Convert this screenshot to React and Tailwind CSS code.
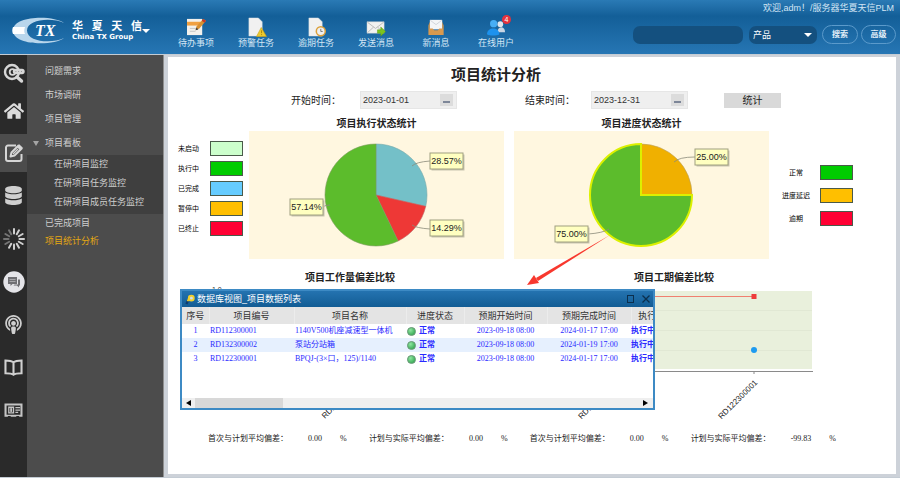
import { useState } from 'react';
import { FaHome, FaDatabase, FaPodcast } from 'react-icons/fa';

const SearchMark = () => (
  <svg viewBox="0 0 22 22" className="w-[22px] h-[22px]" fill="none" stroke="#d6d6d6">
    <circle cx="9" cy="10" r="7" strokeWidth="2.4" />
    <circle cx="9.5" cy="10" r="2.8" strokeWidth="1.8" />
    <path d="M14 15l4.500 4" strokeWidth="3.400" strokeLinecap="round" />
    <path d="M12.500 9.500h6.500" strokeWidth="5.400" strokeLinecap="round" />
    <path d="M12.5 9.5h.8M15.3 9.5h.8M18.1 9.5h.8" stroke="#888" strokeWidth="1.2" />
  </svg>
);

const EditMark = () => (
  <svg viewBox="0 0 20 20" className="w-[20px] h-[20px]" fill="none" stroke="#d6d6d6" strokeWidth="2">
    <path d="M12 2.500H4a2 2 0 0 0-2 2V16a2 2 0 0 0 2 2h11.500a2 2 0 0 0 2-2v-5" />
    <path d="M6.500 13.500l1-4 7-7 3.200 3-7.200 7z" strokeLinejoin="round" />
    <path d="M9 11l5-5" strokeWidth="1.200" />
    <path d="M13 4l3.200 3 2.300-2.300-3.200-3z" fill="#d6d6d6" strokeWidth=".5" />
  </svg>
);

const Spokes = () => (
  <svg viewBox="0 0 24 24" className="w-6 h-6" stroke="#d0d0d0" strokeWidth="2" strokeLinecap="round">
    {[...Array(12)].map((_, i) => (
      <path key={i} d="M12 2v4.5" opacity={i > 7 ? 0.45 : 1} transform={`rotate(${i * 30} 12 12)`} />
    ))}
  </svg>
);

const ChatMark = () => (
  <svg viewBox="0 0 22 22" className="w-[22px] h-[22px]">
    <circle cx="11" cy="11" r="10.7" fill="#e4e4e8" />
    <path d="M5 6h9v7H9.500l-2 2v-2H5z" fill="#6f6f73" />
    <path d="M15 8.500h2v6h-1v2l-2-2h-3.500l1-1H15z" fill="#6f6f73" />
    <path d="M6.500 8.500h6M6.500 10.500h6" stroke="#b5b5b8" strokeWidth=".8" />
  </svg>
);

const BookMark = () => (
  <svg viewBox="0 0 20 18" className="w-[19px] h-[17px]" fill="none" stroke="#d0d0d0" strokeWidth="2.200">
    <path d="M10 3.500C8 1.800 5 1.500 1.500 1.500v13.500c3.500 0 6.500 0 8.500 1.500 2-1.500 5-1.500 8.500-1.500V1.500C15 1.500 12 1.800 10 3.500zM10 3.500v13" />
  </svg>
);

const CardMark = () => (
  <svg viewBox="0 0 20 16" className="w-[19px] h-[15px]" fill="none" stroke="#c4c4c4">
    <path d="M1.500 1.500h17v12h-17z" strokeWidth="2.200" />
    <path d="M5 4.500h5v6H5z" strokeWidth="1.400" />
    <path d="M7.500 5.500v4" strokeWidth="2" />
    <path d="M12 5h5M12 7.500h5M12 10h3" strokeWidth="1.300" />
    <path d="M4 14.500h3M13 14.500h3" stroke="#2a2a2a" strokeWidth="1.500" />
  </svg>
);

const topRail = [
  { id: 'search', label: '搜索', icon: <SearchMark /> },
  { id: 'home', label: '首页', icon: <FaHome size={20} /> },
];

const rail = [
  { id: 'edit', label: '项目', icon: <EditMark />, active: true },
  { id: 'data', label: '数据', icon: <FaDatabase size={19} /> },
  { id: 'load', label: '进度', icon: <Spokes /> },
  { id: 'chat', label: '消息', icon: <ChatMark /> },
  { id: 'cast', label: '广播', icon: <FaPodcast size={19} /> },
  { id: 'book', label: '文档', icon: <BookMark /> },
  { id: 'card', label: '名片', icon: <CardMark /> },
];

const PageShape = () => <path d="M3 1h10l4 4v15H3z" fill="#f1f1f1" stroke="#d5dbe0" strokeWidth=".5" />;

const tools = [
  {
    label: '待办事项',
    icon: (
      <>
        <path d="M1 2h16v17H1z" fill="#f3f1ec" />
        <path d="M1 5h15v4H1z" fill="#f0a040" />
        <path d="M4 12h8M4 15h6" stroke="#c5c5c5" />
        <path d="M10 14l1-4 7-8 3 2-7 8z" fill="#d99030" />
        <path d="M18 2l3 2-1.500 2-3-2z" fill="#c43a2a" />
        <path d="M10 14l1-3 2 2z" fill="#444" />
      </>
    ),
  },
  {
    label: '预警任务',
    icon: (
      <>
        <PageShape />
        <path d="M16 11l5.500 9.500H11z" fill="#ecc92e" stroke="#c9a012" strokeWidth=".6" />
        <path d="M16.300 14v3M16.300 18v1" stroke="#a88410" strokeWidth="1" />
      </>
    ),
  },
  {
    label: '逾期任务',
    icon: (
      <>
        <PageShape />
        <circle cx="15.500" cy="15" r="4.700" fill="#eef0f2" stroke="#dca03a" strokeWidth="1.600" />
        <path d="M15.500 12.500v2.700h2" fill="none" stroke="#777" />
      </>
    ),
  },
  {
    label: '发送消息',
    icon: (
      <>
        <path d="M1 5h18v12H1z" fill="#f2f2f0" stroke="#c9c9c9" strokeWidth=".5" />
        <path d="M1.500 5.500L10 12l8.500-6.500M1.500 16.500L8 10.500M18.500 16.500L12 10.500" fill="none" stroke="#b9b9b9" />
        <path d="M12 13.500h3.500v-3l5 4.800-5 4.700v-3H12z" fill="#7cc41e" stroke="#549a10" strokeWidth=".5" />
      </>
    ),
  },
  {
    label: '新消息',
    icon: (
      <>
        <path d="M4 3h13v10H4z" fill="#f4f5f7" />
        <path d="M2.500 9L4 5v7h3l1.500 2h4l1.500-2h3V5l1.500 4v10h-16z" fill="#d9994e" />
        <path d="M4.500 3.500l6 4.500 6-4.500" fill="none" stroke="#d0d4da" />
      </>
    ),
  },
  {
    label: '在线用户',
    badge: 4,
    icon: (
      <>
        <circle cx="15" cy="7.500" r="3" fill="#dfe6ee" />
        <path d="M12 16c0-7 8-7 8 0z" fill="#c9d6e4" />
        <circle cx="8" cy="7" r="3.800" fill="#47aef5" />
        <path d="M1 18c0-8 13-8 13 0-3 2-10 2-13 0z" fill="#1d92ee" />
      </>
    ),
  },
];

const executionLegend = [
  ['未启动', 'bg-[#ccffcc]'],
  ['执行中', 'bg-[#00cc00]'],
  ['已完成', 'bg-[#66ccff]'],
  ['暂停中', 'bg-[#ffbf00]'],
  ['已终止', 'bg-[#ff0033]'],
];

const progressLegend = [
  ['正常', 'bg-[#00cc00]'],
  ['进度延迟', 'bg-[#ffbf00]'],
  ['逾期', 'bg-[#ff0033]'],
];

const rows = [
  ['1', 'RD112300001', '1140V500机座减速型一体机', '正常', '2023-09-18 08:00', '2024-01-17 17:00', '执行中'],
  ['2', 'RD132300002', '泵站分站箱', '正常', '2023-09-18 08:00', '2024-01-19 17:00', '执行中'],
  ['3', 'RD122300001', 'BPQJ-(3×口，125)/1140', '正常', '2023-09-18 08:00', '2024-01-17 17:00', '执行中'],
];

function slicePath(cx, cy, r, from, to) {
  const point = (t) => {
    const a = t * 2 * Math.PI;
    return `${cx + r * Math.sin(a)} ${cy - r * Math.cos(a)}`;
  };
  return `M${cx} ${cy}L${point(from)}A${r} ${r} 0 ${to - from > 0.5 ? 1 : 0} 1 ${point(to)}Z`;
}

function Pie({ slices, tags }) {
  return (
    <svg viewBox="0 0 255 128" className="w-[255px] h-[128px]">
      {slices.map((s) => (
        <path key={s.from} d={slicePath(127, 64, 51, s.from, s.to)} fill={s.fill} stroke={s.stroke} strokeWidth={s.width} />
      ))}
      {tags.map((t) => (
        <g key={t.text}>
          <path d={t.line} fill="none" stroke="#8a8a7a" strokeWidth=".8" />
          <rect x={t.x + 1.5} y={t.y + 1.5} width="33" height="16" fill="#c9c5b0" />
          <rect x={t.x} y={t.y} width="33" height="16" fill="#ffffc0" stroke="#a0a080" />
          <text x={t.x + 16.5} y={t.y + 11} fontSize="9" textAnchor="middle" fill="#222" fontFamily="Liberation Sans, sans-serif">{t.text}</text>
        </g>
      ))}
    </svg>
  );
}

function Legend({ items, className, labelClass }) {
  return (
    <ul className={className}>
      {items.map(([label, color]) => (
        <li key={label} className="flex items-center">
          <span className={`text-[7px] leading-[15px] text-black ${labelClass}`}>{label}</span>
          <span className={`w-[33px] h-[15px] border border-[#4a5a4a] ${color}`} />
        </li>
      ))}
    </ul>
  );
}

function DateField({ id, value, onChange }) {
  return (
    <div className="flex items-center w-[97px] h-[18px] bg-[#efefef] border border-[#e6e6e6] pr-[3px]">
      <input id={id} type="text" value={value} onChange={(e) => onChange(e.target.value)} className="min-w-0 flex-1 bg-transparent pl-[2px] text-[9px] leading-4 text-[#333] outline-none" />
      <button type="button" aria-label="选择日期" className="flex w-[13px] h-[12px] items-end justify-center bg-[#dcdcdc] pb-[3px]">
        <span className="w-[7px] h-[2px] bg-[#7d8698]" />
      </button>
    </div>
  );
}

function Header() {
  return (
    <header className="flex h-[54px] shrink-0 items-stretch bg-linear-to-b from-[#2a7ab5] via-[#135f98] via-30% to-[#2676b4] text-white">
      <a href="#home" className="flex items-start gap-[6px] pl-[12px] pt-[17px]">
        <svg viewBox="0 0 54 27" className="w-[54px] h-[27px]">
          <path d="M52 6C42-2 1-2 1 13.500S42 29 52 21C40 27 15 25 15 13.500S40 0 52 6z" fill="#b9d6ec" />
          <path d="M1 10h12c-1 3-1 5 0 7H1c-1-2-1-5 0-7z" fill="#fff" />
          <text x="23" y="19" fontSize="16" fontWeight="bold" fontStyle="italic" fill="#fff" fontFamily="Liberation Serif, serif">TX</text>
        </svg>
        <span className="flex w-[70px] flex-col pt-[2px]">
          <span className="flex justify-between text-[11px] leading-[14px] font-bold">
            <span>华</span><span>夏</span><span>天</span><span>信</span>
          </span>
          <span className="font-['DejaVu_Sans',sans-serif] whitespace-nowrap text-[7px] leading-[8px] font-bold">China TX Group</span>
        </span>
        <span className="-ml-[6px] mt-[12px] border-x-4 border-t-4 border-x-transparent border-t-white" />
      </a>
      <nav className="ml-[16px] flex pt-[17px]">
        {tools.map((t) => (
          <a key={t.label} href="#tool" className="relative flex w-[60px] flex-col items-center">
            <svg viewBox="0 0 22 21" className="w-[21px] h-[20px]">{t.icon}</svg>
            <span className="text-[9px] leading-[12px] text-[#d3e6f5]">{t.label}</span>
            {t.badge && (
              <span className="absolute -top-[2px] right-[15px] flex h-[9px] w-[9px] items-center justify-center rounded-full bg-[#e5323c] text-[7px] leading-none">{t.badge}</span>
            )}
          </a>
        ))}
      </nav>
      <div className="ml-auto flex flex-col items-end pr-[4px]">
        <p className="pr-[2px] pt-[1px] text-[9px] leading-[14px] text-[#d3e6f5]">欢迎,adm！/服务器华夏天信PLM</p>
        <form className="mt-[10px] flex items-center" onSubmit={(e) => e.preventDefault()}>
          <input type="text" aria-label="关键字" className="mr-[6px] h-[18px] w-[110px] rounded-[7px] bg-[#14507f] px-2 text-[9px] outline-none" />
          <span className="relative mr-[5px] flex">
            <select aria-label="类型" className="h-[18px] w-[68px] appearance-none rounded-[7px] bg-[#14507f] pl-[4px] text-[9px] leading-[14px] outline-none">
              <option>产品</option>
            </select>
            <span className="pointer-events-none absolute right-[5px] top-[7px] border-x-4 border-t-4 border-x-transparent border-t-white" />
          </span>
          <button type="submit" className="mr-[3px] h-[19px] w-[36px] rounded-full border border-[#5b9acb] text-[8px] leading-[14px] font-bold text-[#e3eff8]">搜索</button>
          <button type="button" className="h-[19px] w-[35px] rounded-full border border-[#5b9acb] text-[8px] leading-[14px] font-bold text-[#e3eff8]">高级</button>
        </form>
      </div>
    </header>
  );
}

function Sidebar() {
  return (
    <aside className="flex shrink-0 text-[#cfcfcf]">
      <div className="w-[27px] bg-[#2a2a2a]">
        {topRail.map((r) => (
          <button key={r.id} type="button" aria-label={r.label} className="flex h-[38px] w-full items-center justify-center pb-[2px] text-[#dcdcdc]">{r.icon}</button>
        ))}
        {rail.map((r) => (
          <div key={r.id} className="flex h-[43px] w-full items-center">
            <button type="button" aria-label={r.label} className={`flex h-[38px] w-full items-center justify-center ${r.active ? 'bg-[#4c4c4c]' : ''}`}>{r.icon}</button>
          </div>
        ))}
      </div>
      <nav className="w-[137px] border-r border-[#8f8f8f] bg-[#4c4c4c] pt-[4px] text-[9px]">
        <a href="#a" className="block pl-[18px] leading-6">问题需求</a>
        <a href="#b" className="block pl-[18px] leading-6">市场调研</a>
        <a href="#c" className="block pl-[18px] leading-6">项目管理</a>
        <a href="#d" className="flex items-center pl-[6px] leading-6">
          <span className="mr-[6px] border-x-[3px] border-t-[5px] border-x-transparent border-t-[#a5a5a5]" />
          项目看板
        </a>
        <div className="bg-[#3f3f3f] pb-[2px]">
          <a href="#e" className="block pl-[27px] leading-[19px]">在研项目监控</a>
          <a href="#f" className="block pl-[27px] leading-[19px]">在研项目任务监控</a>
          <a href="#g" className="block pl-[27px] leading-[19px]">在研项目成员任务监控</a>
        </div>
        <a href="#h" className="block pl-[18px] leading-[18px]">已完成项目</a>
        <a href="#i" className="block pl-[18px] leading-[18px] text-[#e5a812]">项目统计分析</a>
      </nav>
    </aside>
  );
}

function DataWindow() {
  return (
    <section className="absolute left-[12px] top-[232px] w-[475px] border-2 border-[#3d8ac4] bg-white">
      <div className="flex h-[16px] items-center bg-linear-to-b from-[#2473b0] to-[#125c94] pl-[3px] pr-[3px] text-white">
        <svg viewBox="0 0 12 12" className="mr-[1px] h-[11px] w-[11px]" fill="none">
          <path d="M1.500 11L4.500 5" stroke="#0d3b70" strokeWidth="2.600" />
          <path d="M3 8L5 2" stroke="#f2d02c" strokeWidth="2" />
          <circle cx="7" cy="4.500" r="2.600" fill="#cfe0ee" stroke="#f2d02c" strokeWidth="2" />
        </svg>
        <h2 className="text-[9px] leading-[14px]">数据库视图_项目数据列表</h2>
        <button type="button" aria-label="最大化" className="ml-auto mr-[8px] h-[8px] w-[7px] border border-[#0b2f4e]" />
        <button type="button" aria-label="关闭">
          <svg viewBox="0 0 8 8" className="h-[8px] w-[8px]" stroke="#0b2f4e" strokeWidth="1.300"><path d="M.5.5l7 7M7.5.5l-7 7" /></svg>
        </button>
      </div>
      <div className="h-[91px] overflow-hidden">
        <table className="w-[500px] table-fixed border-collapse text-[8px] whitespace-nowrap">
          <colgroup>
            <col className="w-[27px]" />
            <col className="w-[85px]" />
            <col className="w-[112px]" />
            <col className="w-[58px]" />
            <col className="w-[83px]" />
            <col className="w-[84px]" />
            <col />
          </colgroup>
          <thead>
            <tr className="h-[17px] bg-[#e4e4e4] text-[9px] leading-[16px] text-[#333]">
              {['序号', '项目编号', '项目名称', '进度状态', '预期开始时间', '预期完成时间', '执行状态'].map((h) => (
                <th key={h} className="border-r border-[#ececec] p-0 font-normal">{h}</th>
              ))}
            </tr>
          </thead>
          <tbody className="font-['Liberation_Serif','Noto_Sans_CJK_SC',serif] text-[#2a2aff]">
            {rows.map(([no, code, name, state, start, end, run]) => (
              <tr key={no} className="h-[14px] leading-[14px] even:bg-[#e6f0fe]">
                <td className="p-0 text-center">{no}</td>
                <td className="p-0 pl-px">{code}</td>
                <td className="p-0 pl-px">{name}</td>
                <td className="p-0 pl-px">
                  <span className="flex items-center gap-[3px] font-bold">
                    <span className="h-[9px] w-[9px] rounded-full border border-[#6f9a7c] bg-radial-[at_35%_30%] from-[#8fe6a0] to-[#1f9a40]" />
                    {state}
                  </span>
                </td>
                <td className="p-0 text-center">{start}</td>
                <td className="p-0 text-center">{end}</td>
                <td className="p-0 font-bold">{run}</td>
              </tr>
            ))}
          </tbody>
        </table>
      </div>
      <div className="flex h-[10px] items-center bg-[#efefef]">
        <span className="mx-[4px] border-y-[3px] border-r-[5px] border-y-transparent border-r-black" />
        <span className="h-full w-[88px] bg-[#d8d8d8]" />
        <span className="ml-auto mr-[5px] border-y-[3px] border-l-[5px] border-y-transparent border-l-black" />
      </div>
    </section>
  );
}

function DeviationChart({ title, axisLabel, points }) {
  return (
    <section className="w-[276px]">
      <h2 className="text-center text-[10px] leading-[14px] font-bold">{title}</h2>
      <svg viewBox="0 0 276 134" className="h-[134px] w-[276px] overflow-visible" fontFamily="Liberation Sans, sans-serif">
        {axisLabel && <text x="0" y="7" fontSize="7" fill="#333">{axisLabel}</text>}
        <rect x="14" y="6" width="262" height="78" fill="#e9f0dc" />
        <path d="M14 25.500h262M14 45.500h262M14 65.500h262" stroke="#e1e8d4" />
        <path d="M12 86.500h265" stroke="#8a8a8a" />
        <path d={`M14 11.500H${points[points.length - 1].x}`} stroke="#f08070" />
        {points.map(({ x, code }) => (
          <g key={code}>
            <path d={`M${x} 86v3`} stroke="#8a8a8a" />
            <rect x={x - 2.5} y="9" width="5" height="5" fill="#ee3b3b" />
            <circle cx={x} cy="65" r="3" fill="#1e9bf0" />
            <text x={x + 4} y="98" fontSize="8" fill="#222" textAnchor="end" transform={`rotate(-45 ${x + 4} 98)`}>{code}</text>
          </g>
        ))}
      </svg>
    </section>
  );
}

const metrics = [
  ['首次与计划平均偏差：', '0.00'],
  ['计划与实际平均偏差：', '0.00'],
  ['首次与计划平均偏差：', '0.00'],
  ['计划与实际平均偏差：', '-99.83'],
];

export default function App() {
  const [start, setStart] = useState('2023-01-01');
  const [end, setEnd] = useState('2023-12-31');

  return (
    <div className="flex min-h-screen flex-col bg-[#c9ced4] font-['Liberation_Sans','Noto_Sans_CJK_SC',sans-serif]">
      <Header />
      <div className="flex flex-1 border-y border-[#c4ccd4]">
        <Sidebar />
        <main className="min-w-0 flex-1 bg-[#cdd2d9] pb-[3px] pl-[4px] pr-[4px] pt-[2px]">
          <div className="relative h-full bg-white pt-[6px] text-[#222]">
            <h1 className="pr-[72px] text-center text-[15px] leading-[24px] font-bold">项目统计分析</h1>
            <form className="mt-[4px] flex items-center pl-[123px] text-[10px]" onSubmit={(e) => e.preventDefault()}>
              <label htmlFor="start" className="mr-[19px]">开始时间：</label>
              <DateField id="start" value={start} onChange={setStart} />
              <label htmlFor="end" className="ml-[68px] mr-[16px]">结束时间：</label>
              <DateField id="end" value={end} onChange={setEnd} />
              <button type="submit" className="ml-[36px] h-[15px] w-[57px] bg-[#d9d9d9] leading-[15px]">统计</button>
            </form>

            <div className="mt-[8px] flex">
              <Legend items={executionLegend} className="flex w-[81px] shrink-0 flex-col gap-[5px] pl-[10px] pt-[24px]" labelClass="w-[32px]" />
              <section className="flex-1">
                <h2 className="text-center text-[10px] leading-[14px] font-bold">项目执行状态统计</h2>
                <div className="flex justify-center bg-[#fff7e0]">
                  <Pie
                    slices={[
                      { from: 0, to: 0.2857, fill: '#74c0c8', stroke: '#7aa', width: 0.6 },
                      { from: 0.2857, to: 0.4286, fill: '#ee3836', stroke: '#b66', width: 0.6 },
                      { from: 0.4286, to: 1, fill: '#5cbc2c', stroke: '#7a9a5a', width: 0.6 },
                    ]}
                    tags={[
                      { text: '28.57%', x: 181, y: 22, line: 'M163 35q4-4 18-5' },
                      { text: '57.14%', x: 41, y: 68, line: 'M81 74q-4 0-8 2' },
                      { text: '14.29%', x: 181, y: 89, line: 'M163 94q4 3 18 4' },
                    ]}
                  />
                </div>
              </section>
              <section className="ml-[10px] flex-1">
                <h2 className="text-center text-[10px] leading-[14px] font-bold">项目进度状态统计</h2>
                <div className="flex justify-center bg-[#fff7e0]">
                  <Pie
                    slices={[
                      { from: 0, to: 0.25, fill: '#f0b000', stroke: '#b8a060', width: 0.6 },
                      { from: 0.25, to: 1, fill: '#5cbc2c', stroke: '#dcf000', width: 2 },
                    ]}
                    tags={[
                      { text: '25.00%', x: 181, y: 18, line: 'M160 31q5-5 21-5' },
                      { text: '75.00%', x: 41, y: 95, line: 'M95 98q-6 4-21 5' },
                    ]}
                  />
                </div>
              </section>
              <Legend items={progressLegend} className="flex w-[127px] shrink-0 flex-col gap-[8px] pl-[10px] pt-[48px]" labelClass="mr-[7px] w-[34px] text-center" />
            </div>

            <div className="mt-[12px] flex justify-between pl-[44px] pr-[84px]">
              <DeviationChart title="项目工作量偏差比较" axisLabel="1.0" points={[{ x: 145, code: 'RD112300001' }]} />
              <DeviationChart title="项目工期偏差比较" points={[{ x: 78, code: 'RD132300002' }, { x: 218, code: 'RD122300001' }]} />
            </div>

            <dl className="mt-[13px] flex justify-between pl-[40px] pr-[60px] text-[8px] leading-[14px]">
              {metrics.map(([label, value], i) => (
                <div key={i} className="flex">
                  <dt>{label}</dt>
                  <dd className="ml-[20px] flex gap-[18px] font-['Liberation_Serif',serif]">
                    <span>{value}</span>
                    <span>%</span>
                  </dd>
                </div>
              ))}
            </dl>

            <DataWindow />
            <svg viewBox="0 0 84 52" className="pointer-events-none absolute left-[359px] top-[177px] h-[52px] w-[84px]" fill="#f8382e">
              <path d="M83 1L11 47l-2-3z" />
              <path d="M0 51l7-10 5 8z" />
            </svg>
          </div>
        </main>
      </div>
    </div>
  );
}
